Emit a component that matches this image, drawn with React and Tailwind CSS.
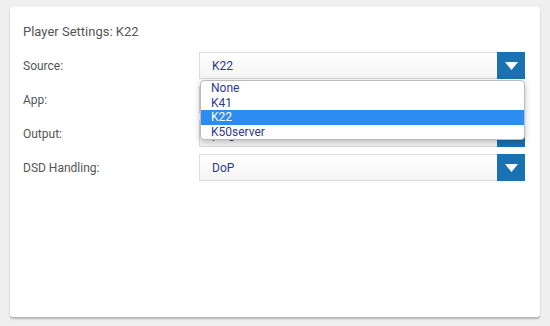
import { useState } from "react";

const FIELDS = [
  { label: "Source:", value: "K22" },
  { label: "App:", value: "Roon" },
  { label: "Output:", value: "plughw" },
  { label: "DSD Handling:", value: "DoP" },
];

const SOURCES = ["None", "K41", "K22", "K50server"];

const Arrow = () => (
  <svg width="13" height="8" viewBox="0 0 13 8">
    <polygon points="0,0 13,0 6.5,8" fill="#fff" />
  </svg>
);

const SelectBox = ({ value }) => (
  <div className="flex h-[27px] border border-[#dcdcdc] bg-gradient-to-b from-white to-[#f4f4f4]">
    <div className="flex-1 flex items-center pl-[12px] text-[12px] text-[#2f3a8c]">
      {value}
    </div>
    <div className="w-[28px] -my-px -mr-px bg-[#1b72b2] flex items-center justify-center">
      <Arrow />
    </div>
  </div>
);

export default function App() {
  const [open] = useState(true);
  const selected = "K22";

  return (
    <div
      className="h-[326px] bg-[#efefef] pt-[7px] px-[10px] pb-[9px]"
      style={{ fontFamily: "Roboto, 'Liberation Sans', sans-serif" }}
    >
      <div className="h-full bg-white rounded-[3px] shadow-[0_2px_2px_rgba(0,0,0,0.25)] pl-[13px] pr-[15px] pt-[16px]">
        <h1 className="text-[13px] leading-[18px] text-[#555]">
          Player Settings: K22
        </h1>

        <div className="relative mt-[11px] flex flex-col gap-[7px]">
          {FIELDS.map((f) => (
            <div key={f.label} className="grid grid-cols-[176px_1fr] items-center">
              <span className="text-[12px] text-[#555]">{f.label}</span>
              <SelectBox value={f.value} />
            </div>
          ))}

          {open && (
            <ul className="absolute top-[28px] left-[177px] right-0 bg-white border border-[#bbb] rounded-[4px] shadow-[0_2px_6px_rgba(0,0,0,0.25)] overflow-hidden">
              {SOURCES.map((s) => (
                <li
                  key={s}
                  className={
                    s === selected
                      ? "h-[14.5px] leading-[14.5px] pl-[10px] text-[12px] bg-[#2d8cf0] text-white"
                      : "h-[14.5px] leading-[14.5px] pl-[10px] text-[12px] text-[#2f3a8c]"
                  }
                >
                  {s}
                </li>
              ))}
            </ul>
          )}
        </div>
      </div>
    </div>
  );
}
